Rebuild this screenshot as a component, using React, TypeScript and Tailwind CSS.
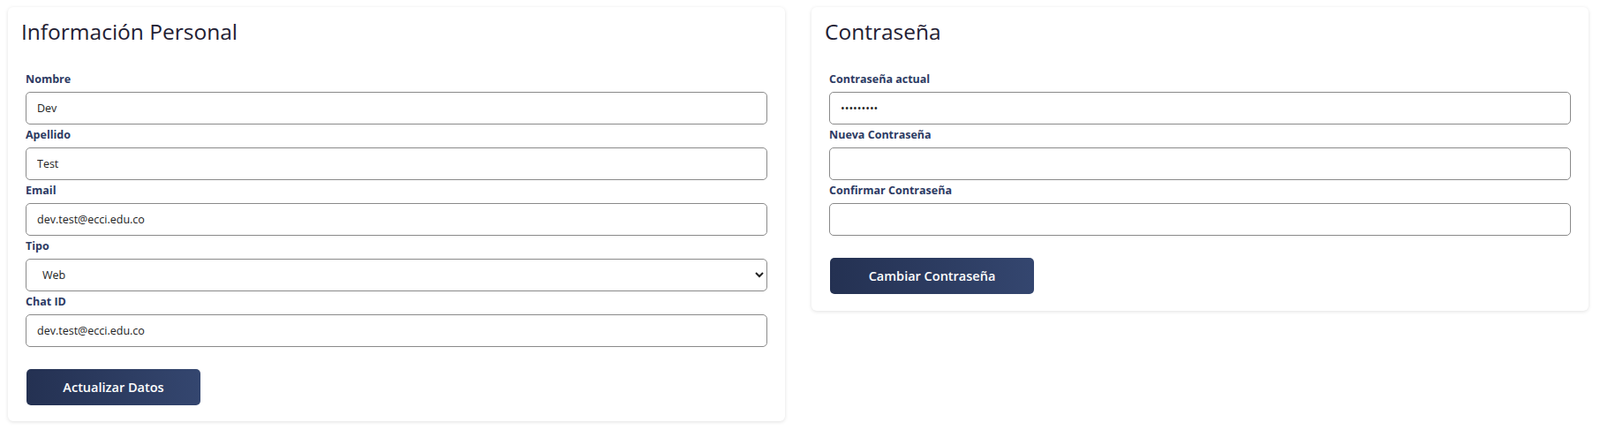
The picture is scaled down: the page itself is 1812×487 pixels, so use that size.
import React from 'react';

const font = { fontFamily: '"Open Sans", "Liberation Sans", sans-serif' };

function Field({ label, children }: { label: string; children: React.ReactNode }) {
  return (
    <div>
      <label className="block text-[12.5px] font-bold leading-[20px] mt-[2px] mb-[4px] text-[#2c3a63]">{label}</label>
      {children}
    </div>
  );
}

const inputCls =
  'block w-full h-[37px] rounded-[5px] border border-[#8a8a8a] bg-white px-[12px] text-[12.5px] text-[#222] outline-none';

export default function App() {
  return (
    <div style={font} className="flex items-start gap-[30px] pl-[9px] pr-[13px] pt-[8px] bg-white min-h-[487px]">
      {/* datos personales */}
      <div className="w-[880px] rounded-[6px] bg-white shadow-[0_1px_4px_rgba(0,0,0,0.12)] px-[15px] pt-[10px] pb-[18px]">
        <h2 className="text-[24.5px] leading-[36px] font-normal text-[#1f2033] mb-[26px]">Información Personal</h2>
        <form className="px-[5px]" onSubmit={(e) => e.preventDefault()}>
          <Field label="Nombre">
            <input className={inputCls} defaultValue="Dev" />
          </Field>
          <Field label="Apellido">
            <input className={inputCls} defaultValue="Test" />
          </Field>
          <Field label="Email">
            <input className={inputCls} defaultValue="dev.test@ecci.edu.co" />
          </Field>
          <Field label="Tipo">
            <select className={inputCls + ' pl-[14px] pr-[6px]'} defaultValue="web">
              <option value="web">Web</option>
              <option value="telegram">Telegram</option>
            </select>
          </Field>
          <Field label="Chat ID">
            <input className={inputCls} defaultValue="dev.test@ecci.edu.co" />
          </Field>
          <button
            type="submit"
            className="mt-[25px] ml-[1px] w-[197px] h-[41px] rounded-[5px] bg-gradient-to-r from-[#243152] to-[#34466f] text-white text-[14.5px] font-semibold"
          >
            Actualizar Datos
          </button>
        </form>
      </div>

      {/* contraseña */}
      <div className="w-[880px] rounded-[6px] bg-white shadow-[0_1px_4px_rgba(0,0,0,0.12)] px-[15px] pt-[10px] pb-[19px]">
        <h2 className="text-[24.5px] leading-[36px] font-normal text-[#1f2033] mb-[26px]">Contraseña</h2>
        <form className="px-[5px]" onSubmit={(e) => e.preventDefault()}>
          <Field label="Contraseña actual">
            <input type="password" className={inputCls + ' bg-[#e8f0fe]'} defaultValue="123456789" />
          </Field>
          <Field label="Nueva Contraseña">
            <input type="password" className={inputCls} />
          </Field>
          <Field label="Confirmar Contraseña">
            <input type="password" className={inputCls} />
          </Field>
          <button
            type="submit"
            className="mt-[25px] ml-[1px] w-[231px] h-[41px] rounded-[5px] bg-gradient-to-r from-[#243152] to-[#34466f] text-white text-[14.5px] font-semibold"
          >
            Cambiar Contraseña
          </button>
        </form>
      </div>
    </div>
  );
}
